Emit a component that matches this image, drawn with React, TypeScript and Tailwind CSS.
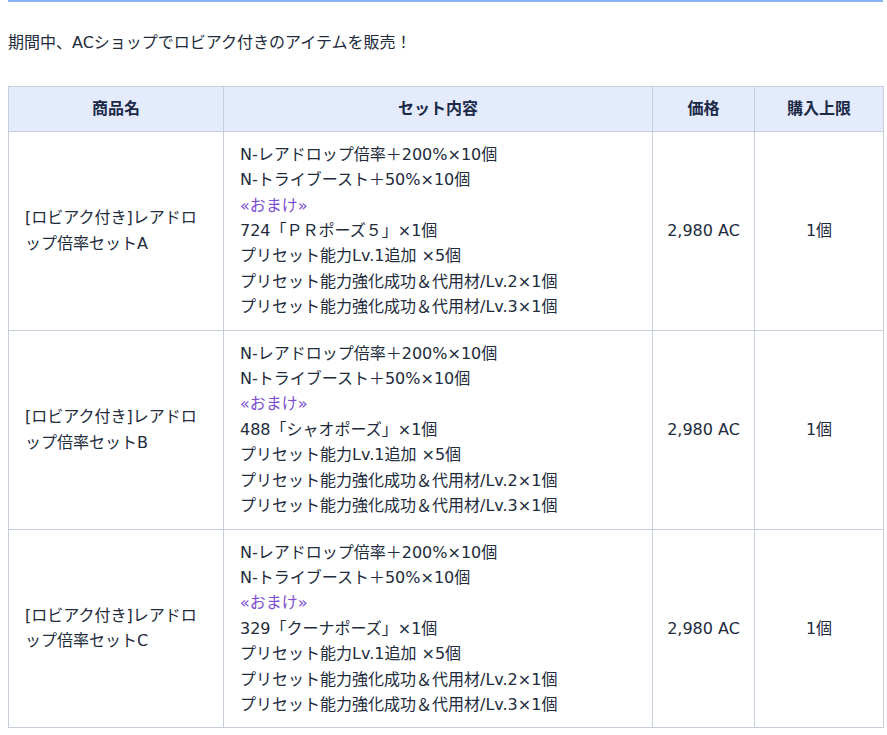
const rows = [
  { set: 'A', bonus: '724「ＰＲポーズ５」×1個' },
  { set: 'B', bonus: '488「シャオポーズ」×1個' },
  { set: 'C', bonus: '329「クーナポーズ」×1個' },
];

export default function App() {
  return (
    <div
      className="min-h-screen bg-white pl-2 pr-1 text-[16px] leading-[25.4px] text-[#222b3c]"
      style={{ fontFamily: '"DejaVu Sans", "Noto Sans CJK JP", sans-serif' }}
    >
      <div className="border-t-2 border-[#8ab4f8]" />
      <p className="mt-[28px]">期間中、ACショップでロビアク付きのアイテムを販売！</p>

      <table className="mt-[31px] w-[875px] table-fixed border-collapse">
        <colgroup>
          <col className="w-[215px]" />
          <col className="w-[429px]" />
          <col className="w-[102px]" />
          <col className="w-[129px]" />
        </colgroup>
        <thead>
          <tr className="bg-[#e3ebfc] text-[#1c2a48]">
            {['商品名', 'セット内容', '価格', '購入上限'].map((h) => (
              <th key={h} className="border border-[#c6cddb] py-[9px] text-center font-bold">
                {h}
              </th>
            ))}
          </tr>
        </thead>
        <tbody>
          {rows.map((r) => (
            <tr key={r.set}>
              <td className="border border-[#c6cddb] px-4 py-2.5 align-middle">
                [ロビアク付き]レアドロ
                <br />
                ップ倍率セット{r.set}
              </td>
              <td className="border border-[#c6cddb] px-4 py-2.5 align-middle">
                <div>N-レアドロップ倍率＋200%×10個</div>
                <div>N-トライブースト＋50%×10個</div>
                <div className="text-[#7d4fcf]">«おまけ»</div>
                <div>{r.bonus}</div>
                <div>プリセット能力Lv.1追加 ×5個</div>
                <div>プリセット能力強化成功＆代用材/Lv.2×1個</div>
                <div>プリセット能力強化成功＆代用材/Lv.3×1個</div>
              </td>
              <td className="border border-[#c6cddb] px-2 py-2.5 text-center align-middle">2,980 AC</td>
              <td className="border border-[#c6cddb] px-2 py-2.5 text-center align-middle">1個</td>
            </tr>
          ))}
        </tbody>
      </table>
    </div>
  );
}
